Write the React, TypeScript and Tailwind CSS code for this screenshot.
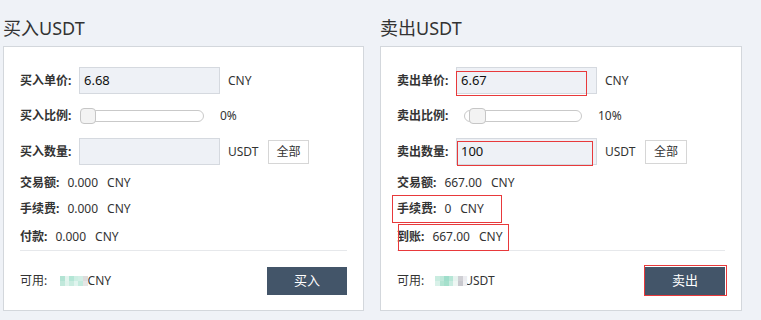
import React from "react";

const leftBlur = [
  ["#b2e3d3", "#e3f4ee", "#b4e6d6", "#cdeee3", "#d2efe6", "#dcdcdc"],
  ["#c1e8db", "#dff3ec", "#c9ece0", "#e0f4ee", "#c4ebde", "#e6e6e6"],
];
const rightBlur = [
  ["#c9ece0", "#bfe8da", "#9fdecb", "#b6e6d6", "#e6f3ef", "#cfcfd4", "#ececf0"],
  ["#d9f1e9", "#b3e4d3", "#a5e0cc", "#c8ebe0", "#eef6f3", "#c8c8ce", "#f0f0f2"],
];

function Blur({ cells }: { cells: string[][] }) {
  return (
    <div className="relative z-10 flex flex-col">
      {cells.map((row, i) => (
        <div key={i} className="flex">
          {row.map((c, j) => (
            <div key={j} className="h-[5px] w-[4.6px]" style={{ backgroundColor: c }} />
          ))}
        </div>
      ))}
    </div>
  );
}

function Input({ value }: { value?: string }) {
  return (
    <div className="h-[27px] w-[141px] border border-[#d5d9df] bg-[#eef1f6] pl-[4px] text-[13px] leading-[25px] text-[#111]">
      {value}
    </div>
  );
}

function Slider({ labelW, trackW, handleLeft, handleW, pct, label }: { labelW: string; trackW: string; handleLeft: string; handleW: string; pct: string; label: string }) {
  return (
    <div className="mt-[14px] flex h-[16px] items-center">
      <span className={`${labelW} text-[12px] font-bold`}>{label}</span>
      <div className={`relative h-[12px] ${trackW} rounded-[6px] border border-[#c9c9c9] bg-white`}>
        <div className={`absolute top-[-3px] ${handleLeft} h-[16px] ${handleW} rounded-[4px] border border-[#c6c6c6] bg-[#f3f3f3]`} />
      </div>
      <span className="ml-[16px] text-[12px]">{pct}</span>
    </div>
  );
}

function Info({ label, value }: { label: string; value: string }) {
  return (
    <div className="flex h-[20px] items-center text-[12px]">
      <span className="font-bold">{label}</span>
      <span className="ml-[8px]">{value}</span>
      <span className="ml-[9px]">CNY</span>
    </div>
  );
}

export default function App() {
  return (
    <div className="h-[320px] w-[761px] overflow-hidden bg-[#eff2f7] font-['Noto_Sans','Noto_Sans_CJK_SC',sans-serif] text-[#333]">
      <div className="flex gap-4 pl-[3px] pt-[16px]">
        {/* Buy */}
        <div className="w-[361px]">
          <div className="mb-[6px] h-[24px] text-[18px] leading-[24px] text-[#333]">买入USDT</div>
          <div className="border border-[#d3d7dc] bg-white px-4 pt-[20px] pb-[15px]">
            <div className="flex h-[27px] items-center">
              <span className="w-[59px] text-[12px] font-bold">买入单价:</span>
              <Input value="6.68" />
              <span className="ml-2 text-[12px]">CNY</span>
            </div>
            <Slider label="买入比例:" labelW="w-[60px]" trackW="w-[124px]" handleLeft="left-[-1px]" handleW="w-[16px]" pct="0%" />
            <div className="mt-[14px] flex h-[27px] items-center">
              <span className="w-[59px] text-[12px] font-bold">买入数量:</span>
              <Input />
              <span className="ml-2 w-[40px] text-[12px]">USDT</span>
              <button className="h-[24px] w-[41px] border border-[#d6d6d6] bg-white text-[12px] text-[#333]">全部</button>
            </div>
            <div className="mt-[8px]">
              <Info label="交易额:" value="0.000" />
            </div>
            <div className="mt-[6px]">
              <Info label="手续费:" value="0.000" />
            </div>
            <div className="mt-[8px]">
              <Info label="付款:" value="0.000" />
            </div>
            <div className="mt-[3px] border-t border-[#e6e8eb]" />
            <div className="mt-[16px] flex items-center justify-between">
              <div className="flex items-center text-[12px]">
                <span className="w-[40px]">可用:</span>
                <Blur cells={leftBlur} />
                <span>CNY</span>
              </div>
              <button className="h-[28px] w-[80px] bg-[#435569] text-[13px] text-white">买入</button>
            </div>
          </div>
        </div>

        {/* Sell */}
        <div className="w-[362px]">
          <div className="mb-[6px] h-[24px] text-[18px] leading-[24px] text-[#333]">卖出USDT</div>
          <div className="relative border border-[#d3d7dc] bg-white px-4 pt-[20px] pb-[15px]">
            <div className="flex h-[27px] items-center">
              <span className="w-[59px] text-[12px] font-bold">卖出单价:</span>
              <Input value="6.67" />
              <span className="ml-2 text-[12px]">CNY</span>
            </div>
            <Slider label="卖出比例:" labelW="w-[67px]" trackW="w-[118px]" handleLeft="left-[4px]" handleW="w-[17px]" pct="10%" />
            <div className="mt-[14px] flex h-[27px] items-center">
              <span className="w-[59px] text-[12px] font-bold">卖出数量:</span>
              <Input value="100" />
              <span className="ml-2 w-[40px] text-[12px]">USDT</span>
              <button className="h-[24px] w-[42px] border border-[#d6d6d6] bg-white text-[12px] text-[#333]">全部</button>
            </div>
            <div className="mt-[8px]">
              <Info label="交易额:" value="667.00" />
            </div>
            <div className="mt-[6px]">
              <Info label="手续费:" value="0" />
            </div>
            <div className="mt-[8px]">
              <Info label="到账:" value="667.00" />
            </div>
            <div className="mt-[3px] border-t border-[#e6e8eb]" />
            <div className="mt-[16px] flex items-center justify-between">
              <div className="flex items-center text-[12px]">
                <span className="w-[38px]">可用:</span>
                <Blur cells={rightBlur} />
                <span className="ml-[-3px]">USDT</span>
              </div>
              <button className="h-[28px] w-[80px] bg-[#435569] text-[13px] text-white">卖出</button>
            </div>

            {/* red annotation boxes */}
            <div className="pointer-events-none absolute left-[75px] top-[24px] h-[25px] w-[131px] border border-[#e8393b]" />
            <div className="pointer-events-none absolute left-[76px] top-[94px] h-[25px] w-[136px] border border-[#e8393b]" />
            <div className="pointer-events-none absolute left-[11px] top-[148px] h-[28px] w-[110px] border border-[#e8393b]" />
            <div className="pointer-events-none absolute left-[17px] top-[177px] h-[27px] w-[111px] border border-[#e8393b]" />
            <div className="pointer-events-none absolute left-[263px] top-[218px] h-[31px] w-[83px] border border-[#e8393b]" />
          </div>
        </div>
      </div>
    </div>
  );
}
